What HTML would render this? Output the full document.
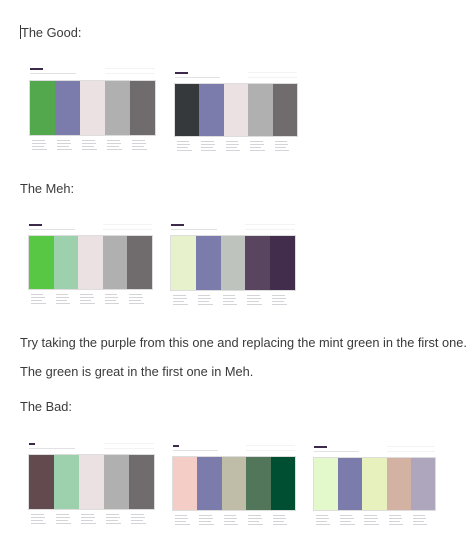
<!DOCTYPE html>
<html><head><meta charset="utf-8"><style>
body{margin:0;width:474px;height:550px;background:#fff;position:relative;overflow:hidden;font-family:"Liberation Sans",sans-serif;}
.t{position:absolute;left:20px;font-size:12.8px;color:#3a3a3a;white-space:nowrap;}
.sw{position:absolute;display:flex;outline:1px solid #ddd;}
.sw div{flex:1;height:100%;}
.lab{position:absolute;display:flex;}
.lab div{flex:1;padding-left:2px;}
.lab i{display:block;height:1px;background:#d4d4d8;margin:2px 0 1.5px;}
.ttl{position:absolute;height:2px;background:#3d2a4a;}
.sub{position:absolute;height:1px;background:#e2e2e2;}
.ln{position:absolute;height:1px;background:#f3f3f3;}
</style></head><body>
<div style="position:absolute;left:20px;top:25px;width:1px;height:14px;background:#333"></div>
<div class="t" style="top:25px;left:21px">The Good:</div>
<div class="t" style="top:181px">The Meh:</div>
<div class="t" style="top:335px">Try taking the purple from this one and replacing the mint green in the first one.</div>
<div class="t" style="top:364px">The green is great in the first one in Meh.</div>
<div class="t" style="top:399px">The Bad:</div>
<div id="c"></div>
<script>
var P=[
[30,81,125,54,68,["#53a84e","#7b7cab","#ebe1e3","#b0b0b0","#706b6d"]],
[175,84,122,52,72,["#36393b","#7b7cab","#ebe1e3","#b0b0b0","#706b6d"]],
[29,236,123,53,224,["#57c744","#9dd0ac","#ebe1e3","#b0b0b0","#706b6d"]],
[171,236,124,54,224,["#e7f2cd","#7b7cab","#bec3be","#5a4560","#432d4d"]],
[29,455,125,54,443,["#624a4f","#9dd0ac","#ebe1e3","#b0b0b0","#706b6d"]],
[173,457,122,53,445,["#f3cdc6","#7b7cab","#bfbca8","#527659","#004f32"]],
[314,458,121,52,446,["#e3f8cb","#7b7cab","#e6f1bd","#d3b2a3","#ada6bd"]]];
var h="";
P.forEach(function(p){var x=p[0],y=p[1],w=p[2],hh=p[3],ty=p[4];
h+='<div class="ttl" style="left:'+x+'px;top:'+ty+'px;width:'+(ty%2?6:13)+'px"></div>';
h+='<div class="sub" style="left:'+x+'px;top:'+(ty+5)+'px;width:'+(w*0.37)+'px"></div>';
h+='<div class="ln" style="left:'+(x+w*0.6)+'px;top:'+(ty)+'px;width:'+(w*0.4)+'px"></div>';
h+='<div class="ln" style="left:'+(x+w*0.6)+'px;top:'+(ty+5)+'px;width:'+(w*0.4)+'px"></div>';
h+='<div class="sw" style="left:'+x+'px;top:'+y+'px;width:'+w+'px;height:'+hh+'px">';
p[5].forEach(function(c){h+='<div style="background:'+c+'"></div>'});
h+='</div><div class="lab" style="left:'+x+'px;top:'+(y+hh+3)+'px;width:'+w+'px">';
for(var i=0;i<5;i++)h+='<div><i style="width:55%"></i><i style="width:60%"></i><i style="width:50%"></i><i style="width:65%"></i></div>';
h+='</div>';});
document.getElementById("c").innerHTML=h;
</script>
</body></html>
